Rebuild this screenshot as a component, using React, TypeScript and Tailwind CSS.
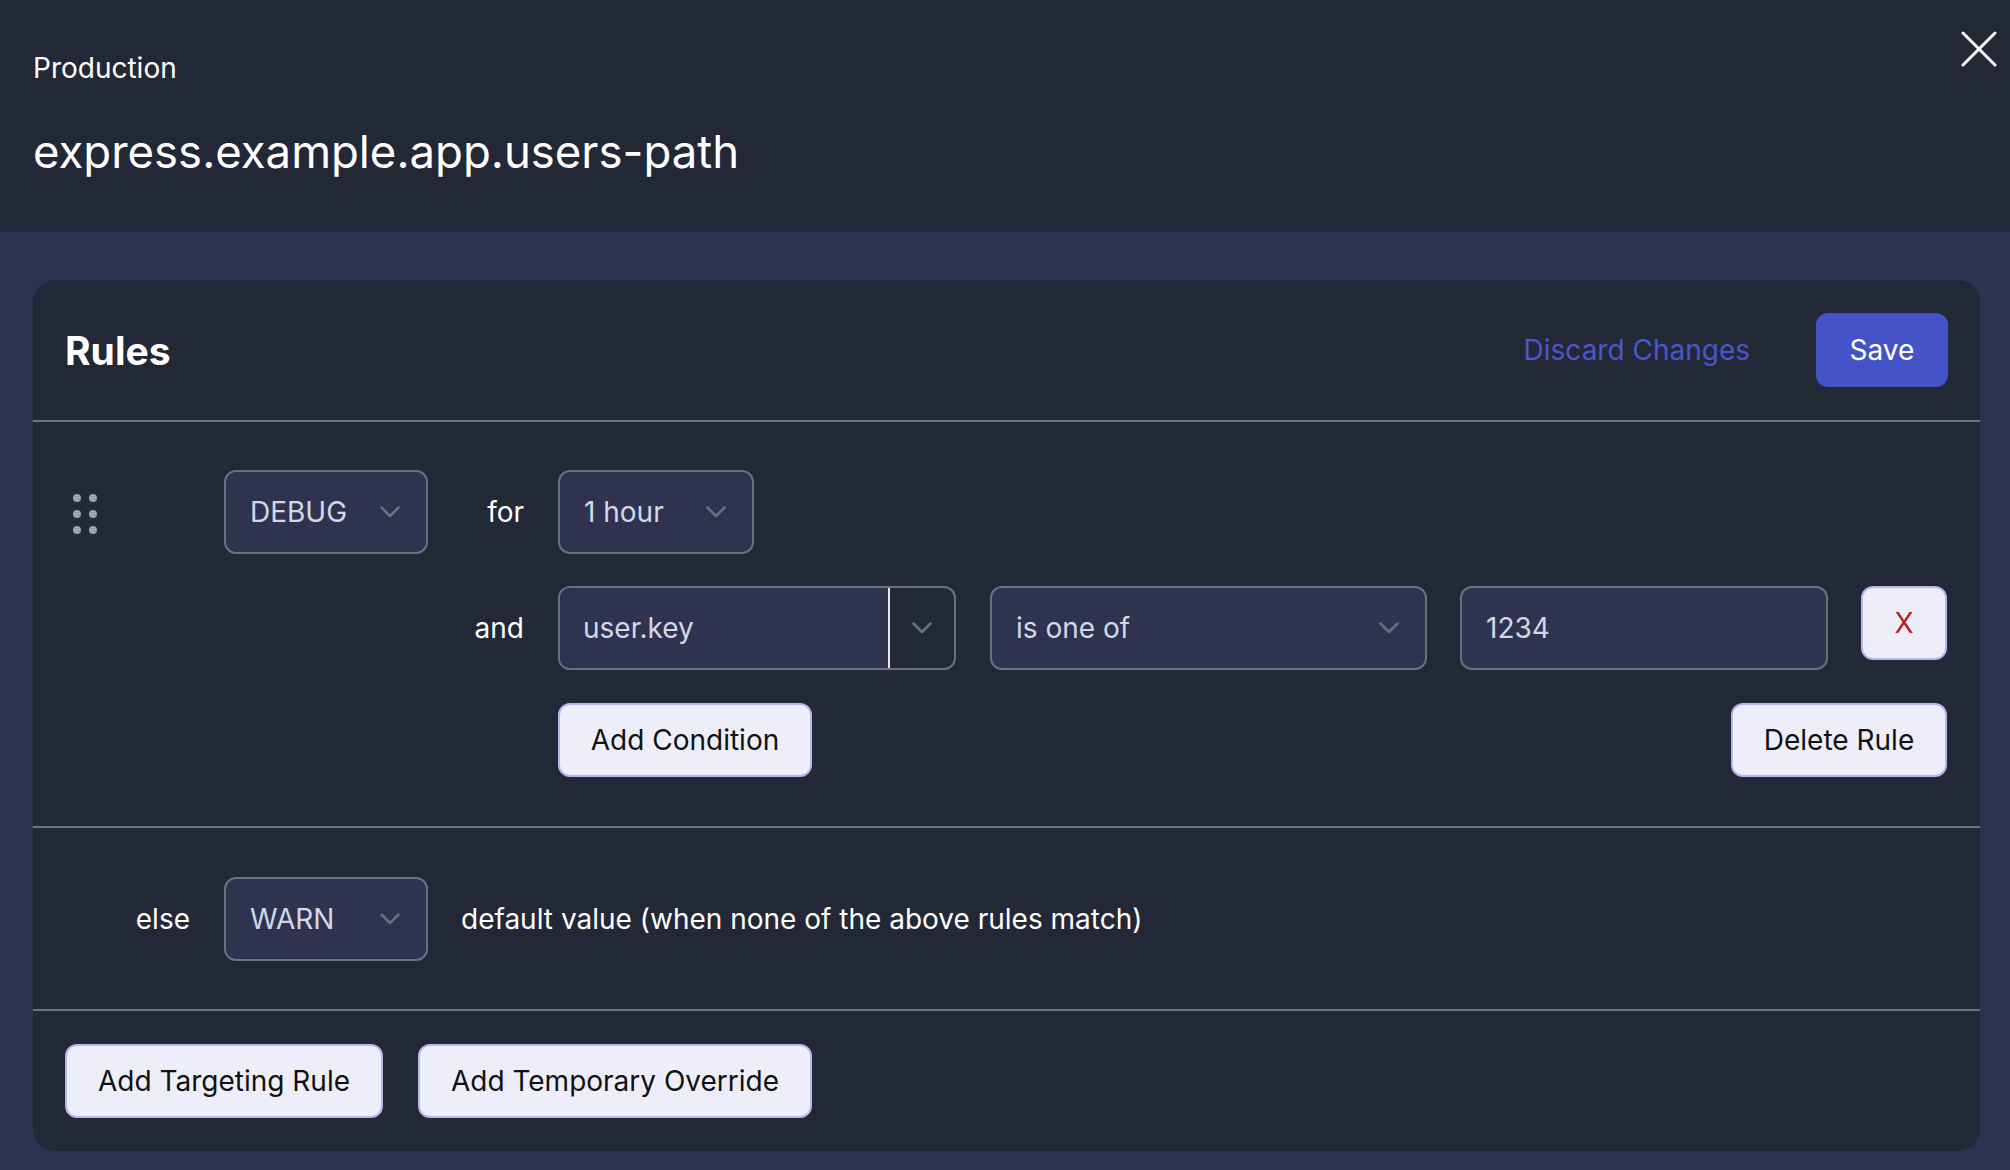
import { useState } from "react";

const font = { fontFamily: "Inter, 'Noto Sans', sans-serif" };

function Chevron() {
  return (
    <svg width="20" height="12" viewBox="0 0 20 12" fill="none">
      <polyline
        points="1.5,1.5 10,10 18.5,1.5"
        stroke="#6b7080"
        strokeWidth="2.5"
        strokeLinecap="round"
        strokeLinejoin="round"
      />
    </svg>
  );
}

function Select({ value, width }: { value: string; width: string }) {
  return (
    <div
      className={`${width} h-[84px] shrink-0 flex items-center justify-between pl-[24px] pr-[26px] rounded-[12px] border-2 border-[#6b7080] bg-[#2f3350] text-[#d3d8e6] text-[28px]`}
    >
      <span>{value}</span>
      <Chevron />
    </div>
  );
}

function LightButton({
  label,
  width,
  className = "",
}: {
  label: string;
  width: string;
  className?: string;
}) {
  return (
    <button
      className={`${width} h-[74px] shrink-0 flex items-center justify-center rounded-[12px] border-2 border-[#b3b8ef] bg-[#eeeefa] text-[#111111] text-[28px] cursor-pointer ${className}`}
    >
      {label}
    </button>
  );
}

function DragHandle() {
  return (
    <div className="grid grid-cols-2 gap-x-[8px] gap-y-[8px] w-[24px]">
      {[0, 1, 2, 3, 4, 5].map((i) => (
        <span key={i} className="w-[8px] h-[8px] rounded-full bg-[#9ca2b3]" />
      ))}
    </div>
  );
}

export default function App() {
  const [attr, setAttr] = useState("user.key");
  const [val, setVal] = useState("1234");

  return (
    <div className="min-h-screen w-full bg-[#2e3250] text-white" style={font}>
      {/* top bar */}
      <div className="h-[232px] bg-[#222836] flex justify-between pl-[33px] pr-[13px]">
        <div className="pt-[47px]">
          <div className="text-[28px] leading-[42px]">Production</div>
          <h1 className="mt-[34px] text-[45.5px] leading-[58px] font-normal">
            express.example.app.users-path
          </h1>
        </div>
        <button className="mt-[31px] w-[36px] h-[36px] cursor-pointer">
          <svg width="36" height="36" viewBox="0 0 36 36">
            <path
              d="M2 2 L34 34 M34 2 L2 34"
              stroke="white"
              strokeWidth="3"
              strokeLinecap="round"
            />
          </svg>
        </button>
      </div>

      <div className="pt-[48px] pb-[20px]">
        <div className="ml-[33px] w-[1947px] rounded-[22px] bg-[#222836]">
          {/* card header */}
          <div className="flex items-center justify-between px-[32px] py-[33px] border-b-2 border-[#6b7280]">
            <h2 className="text-[39px] font-bold leading-none">Rules</h2>
            <div className="flex items-center gap-[66px]">
              <button className="text-[28px] text-[#4a56cc] cursor-pointer">
                Discard Changes
              </button>
              <button className="w-[132px] h-[74px] rounded-[12px] bg-[#4553c9] text-[28px] text-white cursor-pointer">
                Save
              </button>
            </div>
          </div>

          {/* targeting rule */}
          <div className="flex items-start pl-[32px] pr-[33px] pt-[48px] pb-[49px] border-b-2 border-[#6b7280]">
            <div className="w-[125px] shrink-0 pl-[8px] pt-[24px]">
              <DragHandle />
            </div>
            <div className="ml-[34px]">
              <Select value="DEBUG" width="w-[204px]" />
            </div>
            <div className="ml-[34px] flex-1 flex flex-col">
              <div className="flex items-center gap-[34px]">
                <span className="w-[62px] text-right text-[28px]">for</span>
                <Select value="1 hour" width="w-[196px]" />
              </div>
              <div className="mt-[32px] flex items-start gap-[34px]">
                <span className="w-[62px] h-[84px] flex items-center justify-end text-[28px]">
                  and
                </span>
                <div className="flex-1 flex items-start">
                  <div className="w-[398px] h-[84px] shrink-0 flex rounded-[12px] border-2 border-[#6b7080] overflow-hidden">
                    <input
                      value={attr}
                      onChange={(e) => setAttr(e.target.value)}
                      className="w-[330px] bg-[#2f3350] pl-[23px] text-[28px] text-[#d3d8e6] outline-none border-r-2 border-[#e5e7eb]"
                    />
                    <div className="flex-1 flex items-center justify-center">
                      <Chevron />
                    </div>
                  </div>
                  <div className="ml-[34px]">
                    <Select value="is one of" width="w-[437px]" />
                  </div>
                  <input
                    value={val}
                    onChange={(e) => setVal(e.target.value)}
                    className="ml-[33px] w-[368px] h-[84px] shrink-0 rounded-[12px] border-2 border-[#6b7080] bg-[#2f3350] pl-[24px] text-[28px] text-[#d3d8e6] outline-none"
                  />
                  <button className="ml-[33px] w-[86px] h-[74px] shrink-0 rounded-[12px] border-2 border-[#b3b8ef] bg-[#eeeefa] text-[28px] text-[#b42318] cursor-pointer">
                    X
                  </button>
                </div>
              </div>
              <div className="mt-[33px] flex items-center gap-[34px]">
                <span className="w-[62px]" />
                <div className="flex-1 flex justify-between">
                  <LightButton label="Add Condition" width="w-[254px]" />
                  <LightButton label="Delete Rule" width="w-[216px]" />
                </div>
              </div>
            </div>
          </div>

          {/* fallback */}
          <div className="flex items-center pl-[32px] pt-[49px] pb-[48px] border-b-2 border-[#6b7280]">
            <span className="w-[125px] shrink-0 text-right text-[28px]">else</span>
            <div className="ml-[34px]">
              <Select value="WARN" width="w-[204px]" />
            </div>
            <span className="ml-[33px] text-[28px]">
              default value (when none of the above rules match)
            </span>
          </div>

          {/* footer actions */}
          <div className="flex items-center gap-[35px] px-[32px] pt-[33px] pb-[33px]">
            <LightButton label="Add Targeting Rule" width="w-[318px]" />
            <LightButton label="Add Temporary Override" width="w-[394px]" />
          </div>
        </div>
      </div>
    </div>
  );
}
